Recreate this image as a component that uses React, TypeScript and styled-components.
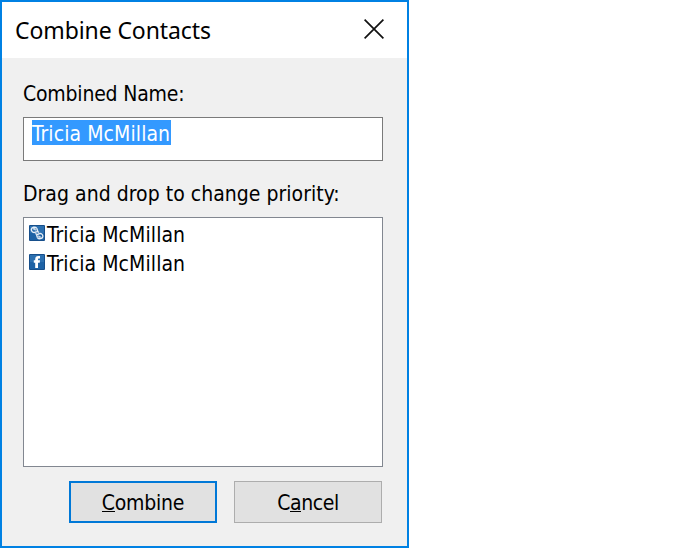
import React from 'react';
import styled, { createGlobalStyle } from 'styled-components';

const GlobalStyle = createGlobalStyle`
  body { margin: 0; background: #fff; overflow: hidden; }
  *, *::before, *::after { box-sizing: border-box; }
`;

const Dialog = styled.div`
  display: flex;
  flex-direction: column;
  width: 409px;
  height: 548px;
  border: 2px solid #0081e3;
  background: #f0f0f0;
  color: #000;
  font-family: 'DejaVu Sans Condensed', 'Noto Sans', sans-serif;
  font-size: 21px;
  line-height: 26px;
  white-space: nowrap;
`;

const TitleBar = styled.header`
  display: flex;
  justify-content: space-between;
  align-items: center;
  height: 56px;
  padding: 0 23px 2px 13px;
  background: #fff;
`;

const Title = styled.h1`
  margin: 0;
  padding-top: 2px;
  font: 400 23px/28px 'Noto Sans', sans-serif;
  letter-spacing: -0.1px;
`;

const CloseButton = styled.button`
  display: flex;
  padding: 0;
  border: 0;
  background: none;
`;

const Body = styled.main`
  display: flex;
  flex-direction: column;
  padding: 23px 22px 0 21px;
`;

const Label = styled.label<{ $spacing?: number }>`
  display: block;
  height: 26px;
  letter-spacing: ${(p) => p.$spacing ?? 0}px;
`;

const NameField = styled.div`
  width: 360px;
  height: 44px;
  margin: 10px 0 20px;
  padding: 2px 0 0 8px;
  border: 1px solid #7a7a7a;
  background: #fff;
`;

const Selected = styled.span`
  display: block;
  width: 139px;
  height: 25px;
  line-height: 28px;
  letter-spacing: 0.08px;
  background: #3399ff;
  color: #fff;
`;

const ContactList = styled.ul`
  width: 360px;
  height: 250px;
  margin: 10px 0 14px;
  padding: 2px 0 0 5px;
  border: 1px solid #828790;
  background: #fff;
  list-style: none;
`;

const Contact = styled.li`
  display: flex;
  gap: 2px;
  height: 29px;
  line-height: 31px;
  letter-spacing: 0.08px;

  svg { margin-top: 5px; }
`;

const Actions = styled.footer`
  display: flex;
  justify-content: flex-end;
  gap: 17px;
  padding-right: 3px;
`;

const Button = styled.button<{ $primary?: boolean }>`
  width: 148px;
  height: 42px;
  padding: 1px 0 0;
  border: ${(p) => (p.$primary ? '2px solid #0078d7' : '1px solid #adadad')};
  background: #e1e1e1;
  color: #000;
  font: inherit;
  letter-spacing: ${(p) => (p.$primary ? -0.25 : -0.4)}px;
`;

const AccessKey = styled.span`
  display: inline-block;
  height: 19px;
  line-height: 21px;
  border-bottom: 1px solid #000;
`;

const CloseIcon = () => (
  <svg width="20" height="20" viewBox="0 0 20 20">
    <path d="M0.6 0.6L19.4 19.4M19.4 0.6L0.6 19.4" stroke="#111" strokeWidth="1.7" />
  </svg>
);

const Tile = ({ children }: { children: React.ReactNode }) => (
  <svg width="16" height="16" viewBox="0 0 16 16">
    <rect width="16" height="16" rx="1" fill="#174f8b" />
    <rect x="1" y="1" width="14" height="14" fill="#1d62a5" />
    <rect x="1" y="1" width="14" height="7" fill="#2c70b0" />
    {children}
  </svg>
);

const LinkIcon = () => (
  <Tile>
    <g fill="none" stroke="#e6eef6" strokeWidth="1.4">
      <path d="M7.7 3.2C6.2 1.6 2.6 2 2.3 4.4C2.1 6.6 4.5 8.2 6.5 7.1C8 6.3 9 6.3 10 7.5" />
      <path d="M4.2 4.2C5.2 3.2 6.7 4.3 5.8 5.2" />
      <path d="M8.4 12.5C9.8 14.4 13.2 14 13.8 11.7C14.2 9.4 11.9 7.8 9.8 8.9C8.4 9.7 7.3 9.5 6.4 8.3" />
      <path d="M11.9 11.6C11 12.7 9.4 11.7 10.2 10.8" />
      <path d="M7.7 3.2L8.8 6.5M8.4 12.5L7.5 9.4" />
    </g>
  </Tile>
);

const FacebookIcon = () => (
  <Tile>
    <path d="M6.2 14V8.8H4.8V6.2H6.2V5.2C6.2 3.1 7.4 2 9.2 2H11V4.6H9.9C9.2 4.6 9 4.9 9 5.5V6.2H11L10.7 8.8H9V14Z" fill="#fff" />
  </Tile>
);

export default function App() {
  return (
    <>
      <GlobalStyle />
      <Dialog role="dialog">
        <TitleBar>
          <Title>Combine Contacts</Title>
          <CloseButton aria-label="Close"><CloseIcon /></CloseButton>
        </TitleBar>
        <Body>
          <Label $spacing={-0.2}>Combined Name:</Label>
          <NameField><Selected>Tricia McMillan</Selected></NameField>
          <Label $spacing={0.03}>Drag and drop to change priority:</Label>
          <ContactList>
            <Contact><LinkIcon />Tricia McMillan</Contact>
            <Contact><FacebookIcon />Tricia McMillan</Contact>
          </ContactList>
          <Actions>
            <Button $primary><AccessKey>C</AccessKey>ombine</Button>
            <Button>C<AccessKey>a</AccessKey>ncel</Button>
          </Actions>
        </Body>
      </Dialog>
    </>
  );
}
